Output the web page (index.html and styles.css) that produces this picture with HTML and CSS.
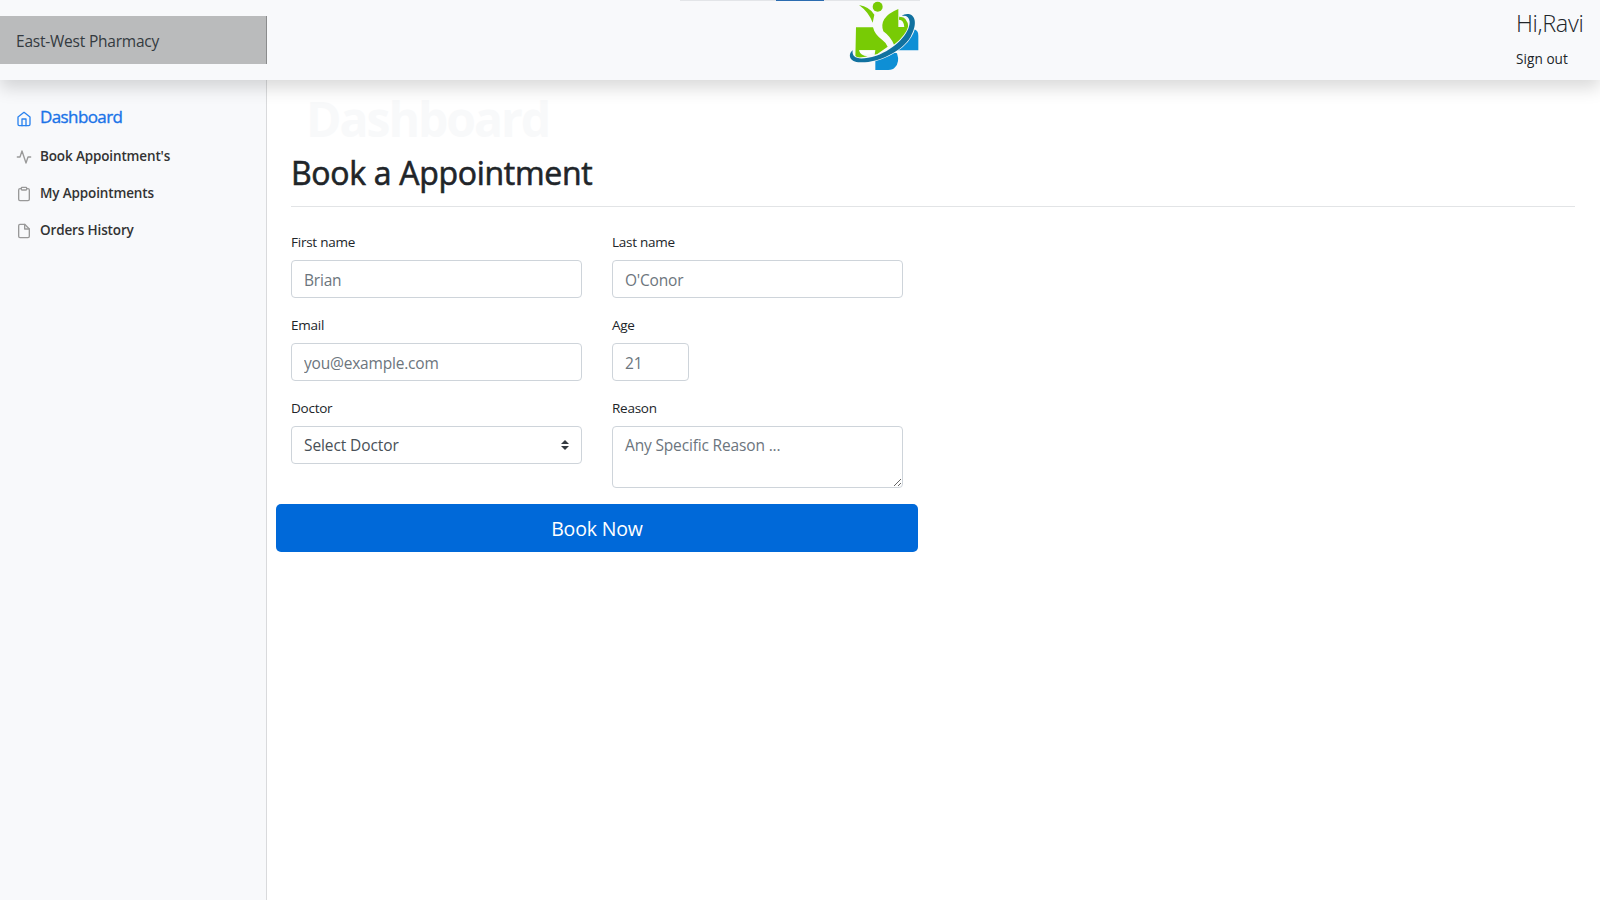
FILE: index.html
```html
<!DOCTYPE html>
<html lang="en">
<head>
<meta charset="utf-8">
<title>East-West Pharmacy</title>
<link rel="stylesheet" href="styles.css">
</head>
<body>
<header class="topbar">
  <a class="brand"><span class="brand-text">East-West Pharmacy</span></a>
  <div class="middle">
    <div class="progress"><div class="progress-bar"></div></div>
    <svg class="logo" viewBox="0 0 270 270" width="90" height="90">
      <circle cx="113" cy="20" r="15" fill="#78cb05"/>
      <path d="M57 15Q88 20 103 44L98 68Q86 36 57 15Z" fill="#78cb05"/>
      <path d="M48 82H99Q104 104 127 120Q138 128 143 140L112 162L104 164L106 151H57Q61 168 83 169L46 176Z" fill="#78cb05"/>
      <path d="M175 27V81H212Q194 112 162 134Q151 109 130 94Q115 52 175 27Z" fill="#78cb05"/>
      <path d="M177 50Q203 48 205 82H193Q192 60 177 59Z" fill="#78cb05"/>
      <path d="M58 151H106Q101 163 82 163Q63 166 58 151Z" fill="#fff"/>
      <path d="M106 172Q137 165 158 153Q161 159 171 160Q180 187 165 202Q159 210 145 210H106Z" fill="#0e8fd5"/>
      <path d="M222 88Q235 90 235 107V151H173Q207 125 222 88Z" fill="#0e8fd5"/>
      <path d="M185 48Q206 44 209 65C210 100 164 147 109 167C62 181 34 178 38 151C23 163 27 187 61 187C112 189 186 155 212 110C231 77 229 45 205 42Q192 41 185 48Z" fill="#11719f" stroke="#f8f9fa" stroke-width="5" paint-order="stroke"/>
    </svg>
  </div>
  <div class="user"><span class="hello">Hi,Ravi</span><a class="signout">Sign out</a></div>
</header>
<div class="layout">
  <nav class="sidebar">
    <a class="item active"><svg viewBox="0 0 24 24"><path d="M3 9l9-7 9 7v11a2 2 0 0 1-2 2H5a2 2 0 0 1-2-2z"/><path d="M9 22V12h6v10"/></svg><span>Dashboard</span></a>
    <a class="item"><svg viewBox="0 0 24 24"><path d="M22 12h-4l-3 9L9 3l-3 9H2"/></svg><span>Book Appointment's</span></a>
    <a class="item"><svg viewBox="0 0 24 24"><path d="M16 4h2a2 2 0 0 1 2 2v14a2 2 0 0 1-2 2H6a2 2 0 0 1-2-2V6a2 2 0 0 1 2-2h2"/><rect x="8" y="2" width="8" height="4" rx="1"/></svg><span>My Appointments</span></a>
    <a class="item"><svg viewBox="0 0 24 24"><path d="M13 2H6a2 2 0 0 0-2 2v16a2 2 0 0 0 2 2h12a2 2 0 0 0 2-2V9z"/><path d="M13 2v7h7"/></svg><span>Orders History</span></a>
  </nav>
  <main class="main">
    <h1 class="ghost">Dashboard</h1>
    <h2 class="title">Book a Appointment</h2>
    <form class="form">
      <div class="field"><label>First name</label><input class="control" placeholder="Brian"></div>
      <div class="field"><label>Last name</label><input class="control" placeholder="O'Conor"></div>
      <div class="field"><label>Email</label><input class="control" placeholder="you@example.com"></div>
      <div class="field"><label>Age</label><input class="control age" placeholder="21"></div>
      <div class="field"><label>Doctor</label>
        <div class="control select"><span>Select Doctor</span><svg viewBox="0 0 4 5" width="8" height="10"><path fill="#343a40" d="M2 0L0 2h4zm0 5L0 3h4z"/></svg></div>
      </div>
      <div class="field"><label>Reason</label><textarea class="control area" placeholder="Any Specific Reason ..."></textarea></div>
      <button class="book" type="button">Book Now</button>
    </form>
  </main>
</div>
</body>
</html>
```
FILE: styles.css
```css
* { box-sizing: border-box; }
body {
  margin: 0;
  height: 900px;
  overflow: hidden;
  display: flex;
  flex-direction: column;
  background: #fff;
  color: #212529;
  font-family: "Open Sans", "Noto Sans", sans-serif;
  font-size: 16px;
  line-height: 24px;
}
.topbar {
  position: relative;
  z-index: 2;
  flex: none;
  display: flex;
  height: 80px;
  background: #f8f9fb;
  box-shadow: 0 8px 16px rgba(0, 0, 0, .15);
}
.brand {
  width: 267px;
  height: 48px;
  margin-top: 16px;
  padding: 13px 16px 11px;
  background: #babbbc;
  box-shadow: inset -1px 0 0 #8b8c8d;
  color: #343a40;
  font-size: 15.5px;
  letter-spacing: -.22px;
}
.middle { flex: 1; display: flex; padding-left: 413px; }
.progress {
  display: flex;
  justify-content: center;
  width: 240px;
  height: 1px;
  margin-right: -80px;
  background: #e3e5e8;
}
.progress-bar { width: 48px; height: 1px; background: #2b6cb0; }
.logo { display: block; }
.user { width: 83px; padding-top: 8px; display: flex; flex-direction: column; }
.hello { margin-left: -1px; font-size: 23.5px; font-weight: 300; line-height: 30px; letter-spacing: -.35px; }
.signout { margin: 11px 0 0 -1px; font-size: 13.6px; line-height: 20px; letter-spacing: .05px; }

.layout { flex: 1; display: flex; }
.sidebar {
  width: 267px;
  padding-top: 18px;
  background: #f8f9fb;
  box-shadow: inset -1px 0 0 rgba(0, 0, 0, .12);
}
.item {
  display: flex;
  align-items: center;
  height: 37px;
  padding-left: 16px;
  color: #333;
  font-size: 13.5px;
  font-weight: 600;
  letter-spacing: -.14px;
}
.item svg {
  width: 16px;
  height: 16px;
  margin: 2px 8px 0 0;
  fill: none;
  stroke: #999;
  stroke-width: 2;
  stroke-linecap: round;
  stroke-linejoin: round;
}
.item.active {
  height: 39px;
  padding-bottom: 2px;
  color: #1a73e8;
  font-size: 17px;
  font-weight: 400;
  letter-spacing: -.6px;
  -webkit-text-stroke: .35px #1a73e8;
}
.item.active svg { stroke: #2b83ef; margin-top: 4px; }

.main { flex: 1; padding: 8px 25px 0 24px; }
.ghost {
  margin: 0 0 0 15px;
  color: #f8f9fa;
  font-size: 48px;
  line-height: 62px;
  font-weight: 700;
  letter-spacing: -2px;
}
.title {
  margin: 0;
  height: 57px;
  border-bottom: 1px solid #e2e4e6;
  font-size: 32px;
  line-height: 45px;
  font-weight: 400;
  letter-spacing: -.3px;
  -webkit-text-stroke: .6px #212529;
}
.form {
  display: grid;
  grid-template-columns: 291px 291px;
  column-gap: 30px;
  margin-top: 25px;
}
.field { height: 83px; }
.field label { display: block; height: 28px; font-size: 13.5px; line-height: 20px; letter-spacing: -.25px; }
.control {
  display: block;
  width: 100%;
  height: 38px;
  padding: 7px 12px 5px;
  border: 1px solid #ced4da;
  border-radius: 4px;
  background: #fff;
  color: #495057;
  font: 15.5px/24px "Open Sans", "Noto Sans", sans-serif;
  letter-spacing: -.2px;
}
.control::placeholder { color: #6c757d; opacity: 1; }
.age { width: 77px; }
.select { display: flex; justify-content: space-between; padding-top: 6px; letter-spacing: -.1px; }
.select svg { margin-top: 7px; }
.area { height: 62px; padding-top: 6px; letter-spacing: -.16px; }
.book {
  grid-column: 1 / 3;
  margin: 23px -15px 0;
  height: 48px;
  padding: 1px 0 0;
  border: 0;
  border-radius: 5px;
  background: #0069d9;
  color: #fff;
  font: 19.5px/47px "Open Sans", "Noto Sans", sans-serif;
  letter-spacing: -.15px;
}
```
